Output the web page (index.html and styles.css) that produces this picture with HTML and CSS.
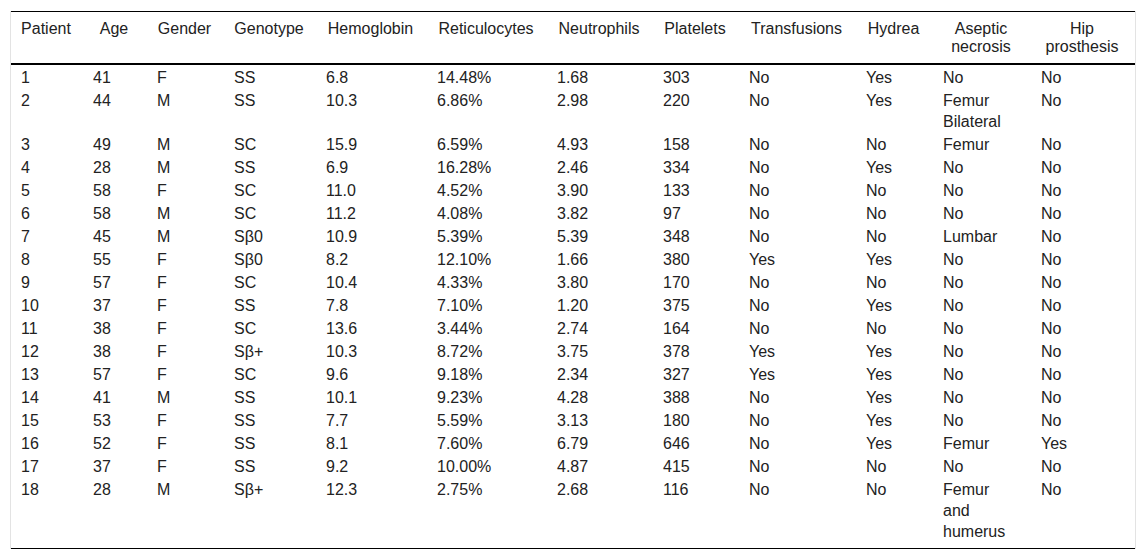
FILE: index.html
```html
<!DOCTYPE html>
<html lang="en">
<head>
<meta charset="utf-8">
<title>Patients</title>
<link rel="stylesheet" href="styles.css">
</head>
<body>
<div class="wrap">
<table class="data">
<colgroup>
<col class="c-patient"><col class="c-age"><col class="c-gender"><col class="c-geno"><col class="c-hb"><col class="c-retic"><col class="c-neut"><col class="c-plt"><col class="c-trans"><col class="c-hydrea"><col class="c-asep"><col class="c-hip">
</colgroup>
<thead>
<tr><th>Patient</th><th>Age</th><th>Gender</th><th>Genotype</th><th>Hemoglobin</th><th>Reticulocytes</th><th>Neutrophils</th><th>Platelets</th><th>Transfusions</th><th>Hydrea</th><th>Aseptic necrosis</th><th>Hip prosthesis</th></tr>
</thead>
<tbody>
<tr><td>1</td><td>41</td><td>F</td><td>SS</td><td>6.8</td><td>14.48%</td><td>1.68</td><td>303</td><td>No</td><td>Yes</td><td>No</td><td>No</td></tr>
<tr><td>2</td><td>44</td><td>M</td><td>SS</td><td>10.3</td><td>6.86%</td><td>2.98</td><td>220</td><td>No</td><td>Yes</td><td>Femur Bilateral</td><td>No</td></tr>
<tr><td>3</td><td>49</td><td>M</td><td>SC</td><td>15.9</td><td>6.59%</td><td>4.93</td><td>158</td><td>No</td><td>No</td><td>Femur</td><td>No</td></tr>
<tr><td>4</td><td>28</td><td>M</td><td>SS</td><td>6.9</td><td>16.28%</td><td>2.46</td><td>334</td><td>No</td><td>Yes</td><td>No</td><td>No</td></tr>
<tr><td>5</td><td>58</td><td>F</td><td>SC</td><td>11.0</td><td>4.52%</td><td>3.90</td><td>133</td><td>No</td><td>No</td><td>No</td><td>No</td></tr>
<tr><td>6</td><td>58</td><td>M</td><td>SC</td><td>11.2</td><td>4.08%</td><td>3.82</td><td>97</td><td>No</td><td>No</td><td>No</td><td>No</td></tr>
<tr><td>7</td><td>45</td><td>M</td><td>Sβ0</td><td>10.9</td><td>5.39%</td><td>5.39</td><td>348</td><td>No</td><td>No</td><td>Lumbar</td><td>No</td></tr>
<tr><td>8</td><td>55</td><td>F</td><td>Sβ0</td><td>8.2</td><td>12.10%</td><td>1.66</td><td>380</td><td>Yes</td><td>Yes</td><td>No</td><td>No</td></tr>
<tr><td>9</td><td>57</td><td>F</td><td>SC</td><td>10.4</td><td>4.33%</td><td>3.80</td><td>170</td><td>No</td><td>No</td><td>No</td><td>No</td></tr>
<tr><td>10</td><td>37</td><td>F</td><td>SS</td><td>7.8</td><td>7.10%</td><td>1.20</td><td>375</td><td>No</td><td>Yes</td><td>No</td><td>No</td></tr>
<tr><td>11</td><td>38</td><td>F</td><td>SC</td><td>13.6</td><td>3.44%</td><td>2.74</td><td>164</td><td>No</td><td>No</td><td>No</td><td>No</td></tr>
<tr><td>12</td><td>38</td><td>F</td><td>Sβ+</td><td>10.3</td><td>8.72%</td><td>3.75</td><td>378</td><td>Yes</td><td>Yes</td><td>No</td><td>No</td></tr>
<tr><td>13</td><td>57</td><td>F</td><td>SC</td><td>9.6</td><td>9.18%</td><td>2.34</td><td>327</td><td>Yes</td><td>Yes</td><td>No</td><td>No</td></tr>
<tr><td>14</td><td>41</td><td>M</td><td>SS</td><td>10.1</td><td>9.23%</td><td>4.28</td><td>388</td><td>No</td><td>Yes</td><td>No</td><td>No</td></tr>
<tr><td>15</td><td>53</td><td>F</td><td>SS</td><td>7.7</td><td>5.59%</td><td>3.13</td><td>180</td><td>No</td><td>Yes</td><td>No</td><td>No</td></tr>
<tr><td>16</td><td>52</td><td>F</td><td>SS</td><td>8.1</td><td>7.60%</td><td>6.79</td><td>646</td><td>No</td><td>Yes</td><td>Femur</td><td>Yes</td></tr>
<tr><td>17</td><td>37</td><td>F</td><td>SS</td><td>9.2</td><td>10.00%</td><td>4.87</td><td>415</td><td>No</td><td>No</td><td>No</td><td>No</td></tr>
<tr class="last"><td>18</td><td>28</td><td>M</td><td>Sβ+</td><td>12.3</td><td>2.75%</td><td>2.68</td><td>116</td><td>No</td><td>No</td><td>Femur and humerus</td><td>No</td></tr>
</tbody>
</table>
</div>
</body>
</html>
```

FILE: styles.css
```css
html, body {
  margin: 0;
  padding: 0;
  background: #ffffff;
}

body {
  font-family: "Liberation Sans", Arial, sans-serif;
  font-size: 16px;
  color: #222222;
}

.wrap {
  margin: 11px 0 0 10px;
  width: 1124px;
  border-left: 1px solid #e3e3e3;
  border-right: 1px solid #e3e3e3;
}

.data {
  width: 1124px;
  table-layout: fixed;
  border-collapse: collapse;
  border-top: 1px solid #000000;
  border-bottom: 1px solid #000000;
}

.c-patient { width: 72px; }
.c-age { width: 64px; }
.c-gender { width: 77px; }
.c-geno { width: 92px; }
.c-hb { width: 111px; }
.c-retic { width: 120px; }
.c-neut { width: 106px; }
.c-plt { width: 86px; }
.c-trans { width: 117px; }
.c-hydrea { width: 77px; }
.c-asep { width: 98px; }
.c-hip { width: 104px; }

.data th {
  font-weight: normal;
  text-align: center;
  vertical-align: top;
  line-height: 18px;
  padding: 8px 12px 7px 10px;
  border-bottom: 2px solid #000000;
}

.data td {
  text-align: left;
  vertical-align: top;
  line-height: 21px;
  padding: 2px 12px 0 10px;
}

.data tr.last td {
  padding-bottom: 6px;
}
```
